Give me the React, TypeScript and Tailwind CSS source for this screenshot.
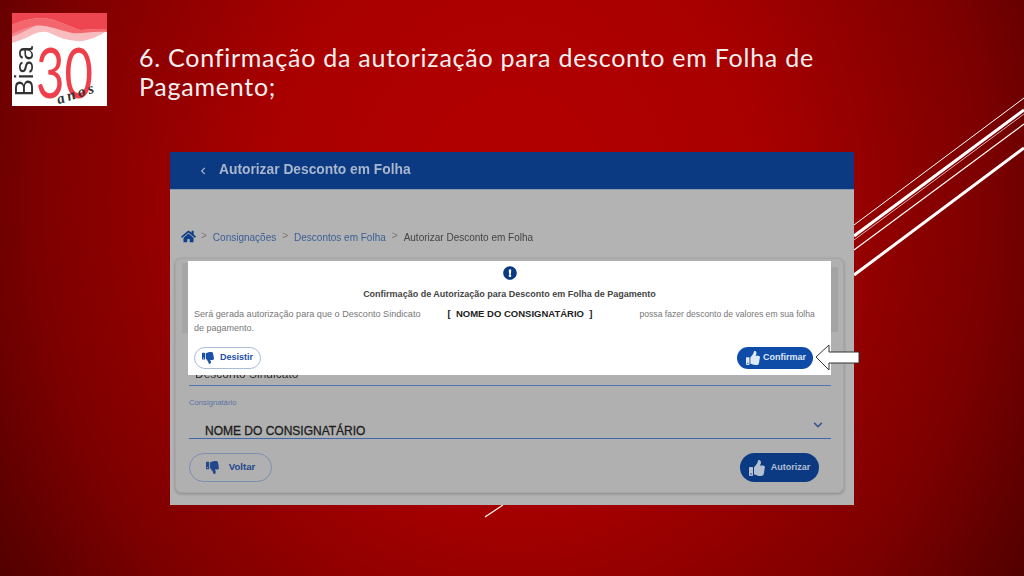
import { FaChevronDown, FaChevronLeft, FaExclamationCircle, FaHome, FaThumbsDown, FaThumbsUp } from 'react-icons/fa';

const sans = "font-['Liberation_Sans',Arial,sans-serif]";

// logo desenhado: ondas + textos reais
function Logo() {
  return (
    <div className="relative h-[93px] w-[95px] shrink-0 overflow-hidden bg-white">
      <svg viewBox="0 0 95 93" className="absolute inset-0 h-full w-full">
        <path d="M0 0H95V18C85 24 75 29 64 28C55 27 48 25 40 21C34 18 28 18 20 22C12 26 6 28 0 30Z" fill="#f8bcbe" />
        <path d="M0 10H30C20 14 10 20 0 24Z" fill="#f4888e" />
        <path d="M0 0H95V17C85 15 78 17 68 17C55 13 45 6 31 5C20 5 8 8 0 12Z" fill="#ee4650" />
        <path d="M0 12C8 8 20 5 31 5C45 6 55 13 68 17C78 17 85 15 95 17V19C80 18 70 21 60 20C46 17 34 11 22 13C12 15 6 18 0 21Z" fill="#f4666e" />
      </svg>
      <span className={`absolute bottom-[9px] left-[1px] rotate-180 text-[26px] leading-[22px] text-[#333] [writing-mode:vertical-rl] ${sans}`}>Bisa</span>
      <span className="absolute left-[24px] top-[23px] origin-left scale-x-[0.7] text-[70px] leading-[70px] text-[#ef3f4b] font-['Lato',sans-serif]">30</span>
      <span className="absolute bottom-[5px] left-[44px] -rotate-[18deg] text-[15px] font-bold italic leading-none tracking-[3px] text-[#333] font-['Liberation_Serif',serif]">anos</span>
    </div>
  );
}

function SlideLines() {
  return (
    <svg viewBox="0 0 1024 576" className="pointer-events-none absolute inset-0 h-full w-full">
      <g stroke="#fff" fill="none">
        <path d="M854 225L1024 98" strokeWidth="1" />
        <path d="M854 236L1024 110" strokeWidth="3" />
        <path d="M854 240L1024 114" strokeWidth="1" opacity="0.7" />
        <path d="M854 250L1024 124" strokeWidth="1.2" />
        <path d="M854 275L1024 148" strokeWidth="3" />
        <path d="M485 517L503 505" strokeWidth="1.2" />
      </g>
    </svg>
  );
}

function ConfirmModal() {
  return (
    <div className={`absolute left-[18px] top-[109px] flex h-[114px] w-[643px] flex-col bg-white px-[6px] pt-[5px] ${sans}`}>
      <div className="flex justify-center text-[#0b3a82]">
        <FaExclamationCircle size={14} />
      </div>
      <p className="mt-[8px] text-center text-[9px] font-bold leading-[12px] text-[#444]">
        Confirmação de Autorização para Desconto em Folha de Pagamento
      </p>
      <div className="mt-[7px] flex h-[14px] items-center text-[#777]">
        <span className="text-[9.1px] leading-[14px]">Será gerada autorização para que o Desconto Sindicato</span>
        <span className="ml-[27px] w-[192px] whitespace-pre text-[9.5px] font-bold leading-[14px] text-[#222]">[  NOME DO CONSIGNATÁRIO  ]</span>
        <span className="text-[8.6px] leading-[14px]">possa fazer desconto de valores em sua folha</span>
      </div>
      <p className="text-[9px] leading-[14px] text-[#777]">de pagamento.</p>
      <div className="mt-[12px] flex items-center justify-between pr-[12px]">
        <button className="flex h-[22px] w-[67px] items-center justify-center gap-[6px] rounded-full border border-[#a9bcdc] text-[9px] font-bold text-[#1c4fa8]">
          <FaThumbsDown size={12} />
          Desistir
        </button>
        <button className="flex h-[22px] w-[76px] items-center justify-center gap-[3px] rounded-full bg-[#0f4ca8] pl-[2px] text-[9px] font-bold text-[#dfe8f6]">
          <FaThumbsUp size={14} />
          Confirmar
        </button>
      </div>
    </div>
  );
}

function ArrowPointer() {
  return (
    <svg viewBox="0 0 46 27" className="absolute left-[645px] top-[192px] h-[27px] w-[46px]">
      <path d="M1 13L14 1V8H44V19H14V26Z" fill="#fff" stroke="#333" strokeWidth="1" />
    </svg>
  );
}

function Panel() {
  return (
    <div className={`relative mx-auto mt-[46px] h-[353px] w-[684px] bg-[#b3b3b3] ${sans}`}>
      <div className="flex h-[38px] items-center gap-[12px] border-b border-[#8b98ae] bg-[#0b3a82] pl-[29px] text-[#a9b6cd] blur-[0.3px]">
        <FaChevronLeft size={8} />
        <span className="text-[13.8px] font-bold">Autorizar Desconto em Folha</span>
      </div>
      <div className="flex h-[56px] items-end gap-[5px] pb-[1px] pl-[11px] text-[10px] text-[#3a5f96] blur-[0.3px]">
        <FaHome size={15} className="mb-[1px] text-[#0f3f88]" />
        <span className="mb-[2px] text-[#777]">&gt;</span>
        <span className="ml-[1px]">Consignações</span>
        <span className="mb-[2px] ml-[1px] text-[#777]">&gt;</span>
        <span className="ml-[1px]">Descontos em Folha</span>
        <span className="mb-[2px] ml-[1px] text-[#777]">&gt;</span>
        <span className="ml-[1px] text-[#444]">Autorizar Desconto em Folha</span>
      </div>
      <div className="relative ml-[5px] mr-[10px] mt-[12px] h-[235px] rounded-[6px] border border-[#a6a6a6] bg-[#b0b0b0] shadow-[0_1px_3px_rgba(0,0,0,0.25)]">
        <div className="absolute left-[6px] top-[4px] h-[70px] w-[6px] bg-[#a6a6a6]" />
        <div className="absolute right-[5px] top-[8px] h-[65px] w-[7px] bg-[#a4a4a4]" />
        <div className="h-[100px]" />
        <div className="ml-[13px] mr-[12px] h-[27px] border-b border-[#4f74b3] pl-[6px] pt-[8px] text-[12px] leading-[14px] text-[#333] blur-[0.3px]">
          Desconto Sindicato
        </div>
        <p className="ml-[13px] mt-[12px] text-[7.7px] leading-[10px] text-[#5c74a3]">Consignatário</p>
        <div className="ml-[13px] mr-[12px] mt-[8px] flex h-[23px] items-end justify-between border-b border-[#3f68ae] pl-[16px] pr-[8px]">
          <span className="text-[12px] leading-[13px] text-[#1c1c1c] [-webkit-text-stroke:0.3px_#1c1c1c]">NOME DO CONSIGNATÁRIO</span>
          <FaChevronDown size={10} className="mb-[8px] text-[#3b5a8e]" />
        </div>
        <div className="ml-[13px] mr-[12px] mt-[14px] flex items-center justify-between pr-[12px]">
          <button className="flex h-[29px] w-[83px] items-center justify-center gap-[10px] rounded-full border border-[#7d8db0] text-[9.6px] font-bold text-[#23478c]">
            <FaThumbsDown size={13} />
            Voltar
          </button>
          <button className="flex h-[29px] w-[79px] items-center justify-center gap-[6px] rounded-full bg-[#0b3a82] text-[9px] font-bold text-[#b4bfd2]">
            <FaThumbsUp size={16} />
            Autorizar
          </button>
        </div>
      </div>
      <ConfirmModal />
      <ArrowPointer />
    </div>
  );
}

export default function App() {
  return (
    <div className="relative h-[576px] w-[1024px] overflow-hidden bg-[radial-gradient(ellipse_62%_125%_at_50%_35%,#b40000_0%,#a80000_40%,#7c0000_75%,#4a0000_100%)]">
      <SlideLines />
      <div className="relative flex pl-[12px] pt-[13px]">
        <Logo />
        <h1 className="ml-[32px] mt-[30px] w-[700px] text-[25px] font-normal leading-[29px] tracking-[0.75px] text-[#f5f0f0] font-['Lato',sans-serif]">
          6. Confirmação da autorização para desconto em Folha de Pagamento;
        </h1>
      </div>
      <Panel />
    </div>
  );
}
